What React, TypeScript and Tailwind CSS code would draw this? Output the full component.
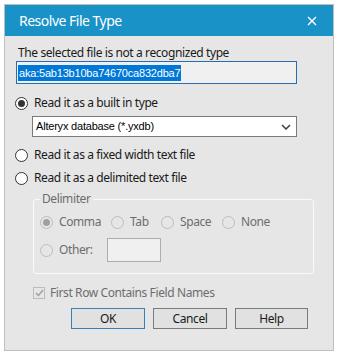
import React from "react"

function Radio({ checked = false, disabled = false }: { checked?: boolean; disabled?: boolean }) {
  return (
    <span
      className={`flex h-[13px] w-[13px] shrink-0 items-center justify-center rounded-full border ${
        disabled ? "border-[#bcbcbc] bg-[#e6e6e6]" : "border-[#333333] bg-white"
      }`}
    >
      {checked && (
        <span className={`h-[7px] w-[7px] rounded-full ${disabled ? "bg-[#a0a0a0]" : "bg-[#333333]"}`} />
      )}
    </span>
  )
}

function RadioRow({ label, checked, disabled }: { label: string; checked?: boolean; disabled?: boolean }) {
  return (
    <div className="flex h-[16px] items-center gap-[6px]">
      <Radio checked={checked} disabled={disabled} />
      <span className={disabled ? "text-[#6d6d6d]" : "text-[#1a1a1a]"}>{label}</span>
    </div>
  )
}

export default function App() {
  const ui = { fontFamily: '"Noto Sans", "Open Sans", sans-serif' }
  const ms = { fontFamily: '"Liberation Sans", Arial, sans-serif' }

  return (
    <div className="h-[357px] w-[341px] bg-white pl-[4px] pt-[4px] text-[12px] tracking-[-0.4px]" style={ui}>
      <div className="flex h-[347px] w-[330px] flex-col border border-[#bfbfbf] bg-[#e6e6e6]">
        {/* Title bar */}
        <div className="flex h-[31px] items-center justify-between bg-[#1892c7] pl-[14px] pr-[16px]">
          <span className="text-[14px] tracking-[-0.5px] text-white">Resolve File Type</span>
          <svg width="10" height="10" viewBox="0 0 10 10">
            <path d="M1 1 L9 9 M9 1 L1 9" stroke="white" strokeWidth="1.4" />
          </svg>
        </div>

        <div className="flex flex-col pl-[10px] pt-[9px]">
          <div className="h-[16px] pl-[3px] leading-[16px] text-[#1a1a1a]">The selected file is not a recognized type</div>

          <div className="ml-[1px] flex h-[23px] w-[281px] items-center border border-[#2b6cae] bg-[#f0f0f0] pl-[1px]">
            <span
              className="bg-[#0078d7] px-[1px] text-[11px] leading-[16px] tracking-[-0.2px] text-white"
              style={ms}
            >
              aka:5ab13b10ba74670ca832dba7
            </span>
          </div>

          <div className="mt-[11px]">
            <RadioRow label="Read it as a built in type" checked />
          </div>

          <div className="ml-[17px] mt-[5px] flex h-[21px] w-[265px] items-center justify-between border border-[#7a7a7a] bg-white pl-[3px] pr-[5px]">
            <span className="text-[11px] tracking-[-0.2px] text-black" style={ms}>Alteryx database (*.yxdb)</span>
            <svg width="10" height="6" viewBox="0 0 10 6">
              <path d="M1 1 L5 5 L9 1" stroke="#404040" strokeWidth="1.5" fill="none" />
            </svg>
          </div>

          <div className="mt-[10px]">
            <RadioRow label="Read it as a fixed width text file" />
          </div>
          <div className="mt-[7px]">
            <RadioRow label="Read it as a delimited text file" />
          </div>

          {/* Delimiter group */}
          <fieldset className="ml-[18px] mt-[6px] h-[82px] w-[281px] rounded-[3px] border border-[#fafafa] pl-[6px] pt-[8px]">
            <legend className="px-[2px] leading-[14px] text-[#6d6d6d]">Delimiter</legend>
            <div className="flex h-[16px] items-center">
              <div className="w-[71px]"><RadioRow label="Comma" checked disabled /></div>
              <div className="w-[50px]"><RadioRow label="Tab" disabled /></div>
              <div className="w-[61px]"><RadioRow label="Space" disabled /></div>
              <RadioRow label="None" disabled />
            </div>
            <div className="mt-[8px] flex h-[24px] items-center">
              <div className="w-[67px]"><RadioRow label="Other:" disabled /></div>
              <div className="h-[24px] w-[54px] border border-[#adadad] bg-[#f0f0f0]" />
            </div>
          </fieldset>

          <div className="ml-[18px] mt-[11px] flex h-[16px] items-center gap-[5px]">
            <span className="flex h-[12px] w-[12px] items-center justify-center border border-[#bcbcbc] bg-[#e6e6e6]">
              <svg width="9" height="8" viewBox="0 0 9 8">
                <path d="M1 4 L3.5 6.5 L8 1" stroke="#a0a0a0" strokeWidth="1.5" fill="none" />
              </svg>
            </span>
            <span className="text-[#6d6d6d]">First Row Contains Field Names</span>
          </div>

          <div className="ml-[56px] mt-[7px] flex gap-[8px]">
            <button className="h-[21px] w-[74px] border border-[#3c7fb1] bg-[#e1e1e1] text-[#1a1a1a]">OK</button>
            <button className="h-[21px] w-[74px] border border-[#7a7a7a] bg-[#e1e1e1] text-[#1a1a1a]">Cancel</button>
            <button className="h-[21px] w-[73px] border border-[#7a7a7a] bg-[#e1e1e1] text-[#1a1a1a]">Help</button>
          </div>
        </div>
      </div>
    </div>
  )
}
